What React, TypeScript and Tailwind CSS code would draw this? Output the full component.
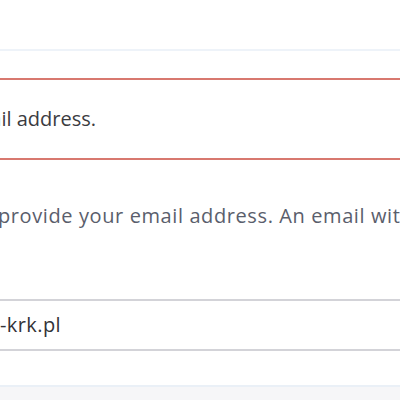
export default function App() {
  return (
    <div className="w-[400px] h-[400px] overflow-hidden bg-white flex flex-col" style={{ fontFamily: '"Open Sans", "Noto Sans", sans-serif' }}>
      <div className="h-[49px] shrink-0" />
      <div className="h-[2px] shrink-0 bg-[#eef3f9]" />
      <div className="h-[27px] shrink-0" />

      {/* error box */}
      <div className="h-[82px] shrink-0 border-y-2 border-[#d8786f] flex items-center">
        <div className="w-[96px] flex justify-end whitespace-nowrap">
          <span className="text-[20px] text-[#3b3b3f]">Please enter a valid email address.</span>
        </div>
      </div>

      <div className="h-[42px] shrink-0" />
      <div className="flex whitespace-nowrap ml-[-2px]">
        <span className="text-[20px] tracking-[0.6px] text-[#5a5e6c] leading-[28px]">provide your email address. An email with a verification link will be sent.</span>
      </div>
      <div className="h-[69px] shrink-0" />

      {/* input */}
      <div className="h-[52px] shrink-0 border-y-2 border-[#d3d3d8] flex items-center">
        <div className="w-[61px] flex justify-end whitespace-nowrap">
          <span className="text-[20px] tracking-[0.4px] text-[#333338]">jan.kowalski@firma-krk.pl</span>
        </div>
      </div>

      <div className="h-[34px] shrink-0" />
      <div className="h-[2px] shrink-0 bg-[#eaf0f7]" />
      <div className="flex-1 bg-[#f6f6f8]" />
    </div>
  );
}
